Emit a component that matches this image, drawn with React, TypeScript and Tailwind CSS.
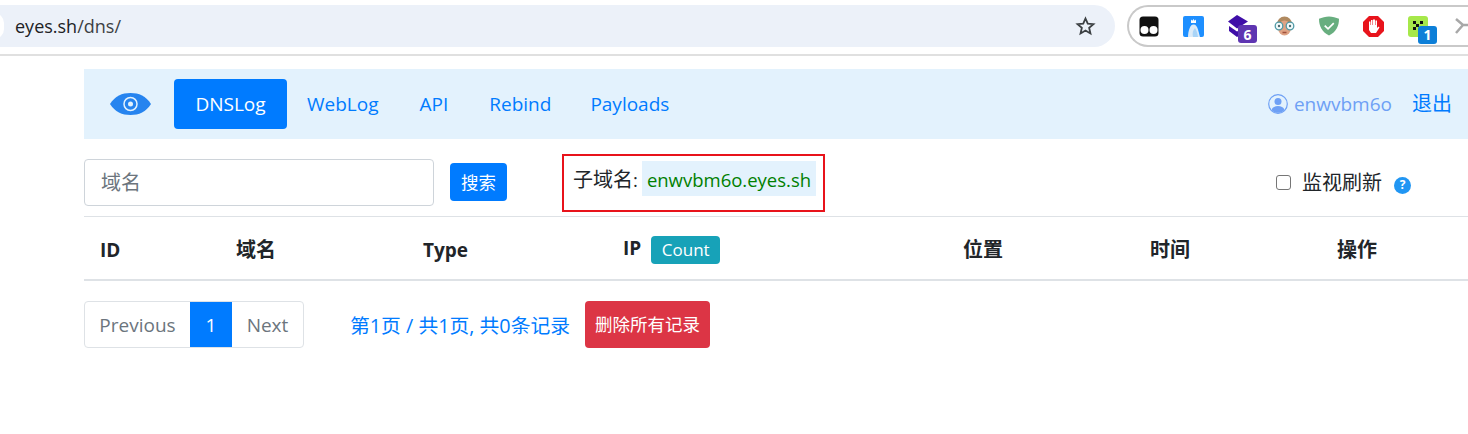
const font = "font-['Segoe_UI','Open_Sans','Noto_Sans_CJK_SC',sans-serif]";

function Cjk({ children }: { children: string }) {
  return <span className="text-[20px]">{children}</span>;
}

function ExtensionIcons() {
  return (
    <div className="flex h-[42px] w-[360px] shrink-0 items-center overflow-hidden rounded-l-[21px] border-2 border-r-0 border-[#c9c9c9] bg-white">
      <div className="ml-[10px] flex items-center gap-[24px]">
        {/* tampermonkey */}
        <svg width="20" height="21" viewBox="0 0 20 21" className="shrink-0">
          <rect x="0.5" y="0.5" width="19" height="20" rx="3.500" fill="#111" />
          <circle cx="5.500" cy="14" r="4" fill="#fff" />
          <circle cx="14.500" cy="14" r="4" fill="#fff" />
        </svg>
        {/* penguin */}
        <svg width="21" height="21" viewBox="0 0 21 21" className="shrink-0">
          <rect width="21" height="21" rx="2" fill="#1e8fff" />
          <path d="M5 21c0-3 .5-6 1.500-8.500S8.500 8.500 10.500 8.500c2.500 0 3.500 2 4.500 5l2 7.500z" fill="#dcebf8" />
          <path d="M8 7V3.500l1.300 1.200L10.500 3l1.200 1.700L13 3.500V7z" fill="#fff" />
          <path d="M10 21c-1-4 0-7 2-9 1.500 2 2.500 5 3 9z" fill="#a9d4f7" />
        </svg>
        {/* stacked layers with badge */}
        <div className="relative h-[22px] w-[22px] shrink-0">
          <svg width="22" height="22" viewBox="0 0 22 22">
            <path d="M0 6.500 9 0l11 6.500-11 7z" fill="#3f0ea8" />
            <path d="M1 11l8 5.500 9-5v4.500l-9 6-8-6z" fill="#3f0ea8" />
          </svg>
          <span className="absolute left-[10px] top-[10px] flex h-[18px] w-[19px] items-center justify-center rounded-[3px] bg-[#5e35b1] text-[14px] font-bold text-white">6</span>
        </div>
        {/* face with glasses */}
        <svg width="21" height="20" viewBox="0 0 21 20" className="shrink-0">
          <circle cx="10.500" cy="8" r="7.500" fill="#b08a60" />
          <ellipse cx="10.500" cy="12" rx="6.500" ry="7.500" fill="#dfa384" />
          <circle cx="5" cy="10" r="3.800" fill="#f2fafa" stroke="#4f9aa6" strokeWidth="1.300" />
          <circle cx="16" cy="10" r="3.800" fill="#f2fafa" stroke="#4f9aa6" strokeWidth="1.300" />
          <circle cx="5" cy="10" r="1.200" fill="#4f6a70" />
          <circle cx="16" cy="10" r="1.200" fill="#4f6a70" />
          <path d="M8.500 16.500h4" stroke="#a0523d" strokeWidth="1.500" />
        </svg>
        {/* shield */}
        <svg width="20" height="20" viewBox="0 0 21 20" className="shrink-0">
          <path d="M10.500 0C7 0 3 1 0 2.500 0 10 3 16.500 10.500 20 18 16.500 21 10 21 2.500 18 1 14 0 10.500 0z" fill="#68ae7f" />
          <path d="m6 9.500 3.500 3.500 6-6" fill="none" stroke="#fff" strokeWidth="1.800" />
        </svg>
        {/* hand stop */}
        <svg width="21" height="21" viewBox="0 0 21 21" className="shrink-0">
          <path d="M6 0h9l6 6v9l-6 6H6l-6-6V6z" fill="#e8141c" />
          <path d="M6 10V5.500h1.500V9h.5V4h1.500v5h.5V3.500H12V9h.5V4.500H14V12l1.500-1.500 1 1L13 17H8l-2-3z" fill="#fff" />
        </svg>
        {/* green qr with badge */}
        <div className="relative h-[21px] w-[23px] shrink-0">
          <svg width="20" height="21" viewBox="0 0 20 21">
            <rect width="20" height="21" rx="3" fill="#a6e84a" />
            <path d="M5 5h3v3H5zM12 5h3v3h-3zM8 8h3v3H8zM5 11h3v3H5z" fill="#111" />
          </svg>
          <span className="absolute left-[10px] top-[10px] flex h-[18px] w-[19px] items-center justify-center rounded-[3px] bg-[#0d7fd8] text-[14px] font-bold text-white">1</span>
        </div>
        {/* scissors, clipped by the window edge */}
        <svg width="16" height="16" viewBox="0 0 16 16" className="shrink-0">
          <path d="M1 1l7 6h8M1 15l7-8" stroke="#a8a8a8" strokeWidth="2.500" fill="none" />
        </svg>
      </div>
    </div>
  );
}

function BrowserBar() {
  return (
    <div className="flex h-[56px] items-center gap-[12px] border-b-2 border-[#e0e0e0] bg-white pb-[2px]">
      <div className="relative flex h-[42px] w-[1115px] shrink-0 items-center justify-between rounded-r-[21px] bg-[#ecf1f9] pl-[15px] pr-[19px]">
        <span className="absolute left-[-16px] top-[8px] h-[26px] w-[20px] rounded-full bg-white" />
        <span className="text-[18px] text-[#202124]">
          eyes.sh<span className="text-[#3c4043]">/dns/</span>
        </span>
        <svg width="21" height="20" viewBox="0 0 24 24" fill="none" stroke="#3c4043" strokeWidth="2.200" strokeLinejoin="miter">
          <path d="M12 3l2.700 6.200 6.800.6-5.100 4.500 1.500 6.600L12 17.400l-5.900 3.500 1.500-6.600-5.100-4.500 6.800-.6z" />
        </svg>
      </div>
      <ExtensionIcons />
    </div>
  );
}

function NavBar() {
  return (
    <nav className="flex h-[70px] items-center bg-[#e3f2fd] pl-[26px] text-[19px] text-[#007bff]">
      <svg width="41" height="24" viewBox="0 0 41 24" className="mr-[23px] shrink-0">
        <path d="M0 12C5 4 12 1 20.500 1S36 4 41 12c-5 8-12 11-20.500 11S5 20 0 12z" fill="#2684ef" />
        <circle cx="20.500" cy="12" r="6.500" fill="none" stroke="#e3f2fd" strokeWidth="1.500" />
        <circle cx="20.500" cy="12" r="2.500" fill="#e3f2fd" />
      </svg>
      <a className="flex h-[50px] w-[113px] items-center justify-center rounded-[4px] bg-[#007bff] text-white">DNSLog</a>
      <a className="ml-[20px]">WebLog</a>
      <a className="ml-[41px]">API</a>
      <a className="ml-[41px]">Rebind</a>
      <a className="ml-[39px]">Payloads</a>
      <div className="ml-auto flex items-center text-[#6ea0f5]">
        <svg width="20" height="20" viewBox="0 0 20 20" className="mr-[6px]">
          <circle cx="10" cy="10" r="9.300" fill="none" stroke="#6ea0f5" strokeWidth="1.200" />
          <circle cx="10" cy="7.500" r="3.500" fill="#6ea0f5" />
          <path d="M3.500 16c1-3 3.500-4 6.500-4s5.500 1 6.500 4c-3.500 3.800-9.500 3.800-13 0z" fill="#6ea0f5" />
        </svg>
        enwvbm6o
      </div>
      <a className="ml-[20px] mr-[16px] text-[20px]">退出</a>
    </nav>
  );
}

function SearchRow() {
  return (
    <div className="flex h-[78px] items-start border-b border-[#dee2e6]">
      <input
        readOnly
        placeholder="域名"
        className="mt-[20px] h-[47px] w-[350px] rounded-[4px] border border-[#ced4da] px-[16px] text-[20px] placeholder:text-[#6c757d] outline-none"
      />
      <button className="ml-[16px] mt-[24px] h-[38px] w-[57px] rounded-[4px] bg-[#007bff] text-[17.500px] text-white">搜索</button>
      <div className="ml-[55px] mt-[15px] flex h-[58px] w-[263px] items-start border-2 border-[#e8131b] pl-[9px] pt-[5px] text-[18.500px] text-[#212529]">
        <span className="mt-[4px]"><Cjk>子域名</Cjk>:</span>
        <span className="ml-[4px] flex h-[35px] items-center bg-[#e3f2fd] px-[5px] pt-[2px] text-[#008000]">enwvbm6o.eyes.sh</span>
      </div>
      <div className="ml-auto mr-[57px] mt-[20px] flex h-[47px] items-center text-[20px] text-[#212529]">
        <span className="mr-[11px] h-[15px] w-[15px] rounded-[3px] border border-[#767676] bg-white" />
        监视刷新
        <span className="ml-[12px] mt-[5px] flex h-[17px] w-[17px] items-center justify-center rounded-full bg-[#2196f3] text-[12px] font-bold text-white">?</span>
      </div>
    </div>
  );
}

function TableHead() {
  return (
    <div className="flex h-[64px] items-center border-b-2 border-[#dee2e6] pt-[4px] text-[19px] font-bold text-[#212529]">
      <span className="ml-[16px] w-[136px]">ID</span>
      <span className="w-[187px]"><Cjk>域名</Cjk></span>
      <span className="w-[200px]">Type</span>
      <span className="flex w-[340px] items-center">
        <span className="mt-[-4px]">IP</span>
        <span className="ml-[10px] flex h-[28px] w-[69px] items-center justify-center rounded-[4px] bg-[#17a2b8] text-[17px] font-normal text-white">Count</span>
      </span>
      <span className="w-[187px]"><Cjk>位置</Cjk></span>
      <span className="w-[187px]"><Cjk>时间</Cjk></span>
      <span><Cjk>操作</Cjk></span>
    </div>
  );
}

function Pagination() {
  return (
    <div className="mt-[20px] flex items-center text-[19px]">
      <div className="flex h-[47px] overflow-hidden rounded-[4px] border border-[#dee2e6] text-[#6c757d]">
        <span className="flex w-[105px] items-center justify-center pt-[2px]">Previous</span>
        <span className="flex w-[42px] items-center justify-center bg-[#007bff] pt-[2px] text-white">1</span>
        <span className="flex w-[71px] items-center justify-center pt-[2px]">Next</span>
      </div>
      <span className="ml-[46px] w-[220px] whitespace-nowrap pt-[2px] text-[19.800px] text-[#007bff]">第1页 / 共1页, 共0条记录</span>
      <button className="ml-[15px] h-[47px] w-[125px] rounded-[4px] bg-[#dc3545] text-[17.500px] text-white">删除所有记录</button>
    </div>
  );
}

export default function App() {
  return (
    <div className={`h-[434px] w-[1468px] overflow-hidden bg-white ${font}`}>
      <BrowserBar />
      <div className="pl-[84px] pt-[13px]">
        <NavBar />
        <SearchRow />
        <TableHead />
        <Pagination />
      </div>
    </div>
  );
}
